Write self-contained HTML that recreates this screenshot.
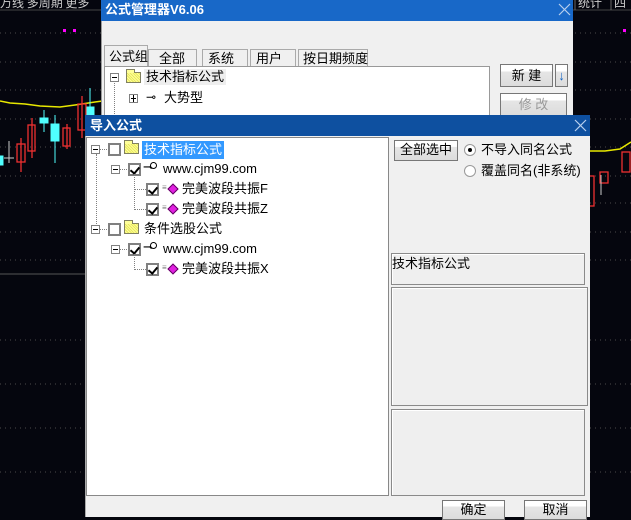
<!DOCTYPE html>
<html><head><meta charset="utf-8"><style>
*{margin:0;padding:0;box-sizing:border-box}
body{width:631px;height:517px;overflow:hidden;background:#05060e;position:relative;font-family:"Liberation Sans","Noto Sans CJK SC",sans-serif;font-size:13px;color:#000}
.a{position:absolute}
.t{white-space:nowrap;line-height:16px}
.btn{position:absolute;background:linear-gradient(#fff 0,#fff 30%,#e6e6e6 31%,#dcdcdc);border:1px solid #777;text-align:center;line-height:18px;font-size:13px}
.cb{position:absolute;width:13px;height:13px;border:2px solid #808080;background:#fff}
.cb.k::after{content:"";position:absolute;left:2px;top:0px;width:4px;height:7px;border:solid #000;border-width:0 2px 2px 0;transform:rotate(40deg)}
.ex{position:absolute;width:9px;height:9px;border:1px solid #808080;background:#fff}
.ex::after{content:"";position:absolute;left:1px;top:3px;width:5px;height:1px;background:#000}
.dv{position:absolute;border-left:1px dotted #808080}
.dh{position:absolute;border-top:1px dotted #808080}
.fold{position:absolute;width:15px;height:11px;background:#ffff80;border:1px solid #808060;background-image:repeating-linear-gradient(45deg,#e8e860 0 1px,#ffff99 1px 2px)}
.fold::before{content:"";position:absolute;left:-1px;top:-4px;width:7px;height:3px;border:1px solid #808060;border-bottom:none;background:#ffff99}
.gem{position:absolute;width:8px;height:8px;background:#e020e0;border:1px solid #600060;transform:rotate(45deg)}
.box{position:absolute;border:1px solid #8a8a8a;box-shadow:inset 1px 1px 0 #fff;background:#efefef}
</style></head><body>
<svg class="a" style="left:0;top:0" width="631" height="517">
<g stroke="#4a4a4a" stroke-dasharray="1 4">
<line x1="0" y1="33" x2="631" y2="33"/><line x1="0" y1="62" x2="631" y2="62"/><line x1="0" y1="90" x2="631" y2="90"/><line x1="0" y1="119" x2="631" y2="119"/><line x1="0" y1="147" x2="631" y2="147"/><line x1="0" y1="176" x2="631" y2="176"/><line x1="0" y1="203" x2="631" y2="203"/><line x1="0" y1="232" x2="631" y2="232"/><line x1="0" y1="260" x2="631" y2="260"/><line x1="0" y1="340" x2="631" y2="340"/><line x1="0" y1="384" x2="631" y2="384"/><line x1="0" y1="428" x2="631" y2="428"/><line x1="0" y1="472" x2="631" y2="472"/>
</g>
<line x1="0" y1="274" x2="85" y2="274" stroke="#555"/>
<line x1="0" y1="10" x2="631" y2="10" stroke="#444"/>
<polyline points="0,101 10,103 25,104 40,106 60,107 75,105 95,102 110,100 125,98 140,97 160,98 200,99 230,99" fill="none" stroke="#e8e800" stroke-width="1.5"/>
<polyline points="590,151 605,151 620,149 631,142" fill="none" stroke="#e8e800" stroke-width="1.5"/>
<g stroke="#ee3030" fill="none" stroke-width="1.3">
<rect x="17" y="144" width="8" height="18"/><line x1="21" y1="138" x2="21" y2="172"/>
<rect x="28" y="125" width="7" height="26"/><line x1="32" y1="118" x2="32" y2="158"/>
<rect x="63" y="128" width="7" height="18"/><line x1="67" y1="124" x2="67" y2="149"/>
<rect x="78" y="104" width="8" height="26"/><line x1="82" y1="96" x2="82" y2="138"/>
<rect x="600" y="172" width="8" height="11"/><rect x="622" y="152" width="8" height="20"/><rect x="588" y="176" width="6" height="30"/>
</g>
<g fill="#50ffff" stroke="#50ffff">
<rect x="40" y="118" width="8" height="5"/><line x1="44" y1="110" x2="44" y2="132"/>
<rect x="51" y="124" width="8" height="17"/><line x1="55" y1="115" x2="55" y2="163"/>
<rect x="87" y="107" width="7" height="8"/><line x1="90" y1="88" x2="90" y2="115"/>
<rect x="0" y="156" width="3" height="9"/>
</g>
<g stroke="#ccc"><line x1="9" y1="141" x2="9" y2="163"/><line x1="4" y1="158" x2="14" y2="158"/><line x1="601" y1="175" x2="601" y2="195"/></g>
<g fill="#ff00ff"><rect x="63" y="29" width="3" height="3"/><rect x="73" y="29" width="3" height="3"/><rect x="623" y="29" width="3" height="3"/></g>
<text x="0" y="7" fill="#ccc" font-size="12" font-family="Noto Sans CJK SC">万线  多周期  更多</text>
<text x="578" y="7" fill="#ccc" font-size="12" font-family="Noto Sans CJK SC">统计</text>
<text x="614" y="7" fill="#ccc" font-size="12" font-family="Noto Sans CJK SC">四</text>
<line x1="575" y1="0" x2="575" y2="10" stroke="#666"/><line x1="611" y1="0" x2="611" y2="10" stroke="#666"/>
</svg>

<!-- manager dialog -->
<div class="a" style="left:101px;top:0;width:472px;height:116px;background:#f0f0f0;border-left:1px solid #999"></div>
<div class="a" style="left:101px;top:0;width:472px;height:21px;background:#1868c8"></div>
<div class="a t" style="left:105px;top:2px;color:#fff;font-weight:bold;font-size:13px">公式管理器V6.06</div>
<svg class="a" style="left:558px;top:3px" width="13" height="13"><path d="M1 1L12 12M12 1L1 12" stroke="#b8cfee" stroke-width="1.2"/></svg>
<div class="a" style="left:104px;top:45px;width:44px;height:22px;background:#f0f0f0;border:1px solid #aaa;border-bottom:none"></div>
<div class="a t" style="left:109px;top:49px">公式组</div>
<div class="a" style="left:148px;top:49px;width:49px;height:17px;border:1px solid #aaa;border-bottom:none;background:#f0f0f0"></div><div class="a t" style="left:159px;top:51px">全部</div>
<div class="a" style="left:202px;top:49px;width:46px;height:17px;border:1px solid #aaa;border-bottom:none"></div><div class="a t" style="left:208px;top:51px">系统</div>
<div class="a" style="left:250px;top:49px;width:46px;height:17px;border:1px solid #aaa;border-bottom:none"></div><div class="a t" style="left:256px;top:51px">用户</div>
<div class="a" style="left:298px;top:49px;width:70px;height:17px;border:1px solid #aaa;border-bottom:none"></div><div class="a t" style="left:303px;top:51px">按日期频度</div>
<div class="a" style="left:104px;top:66px;width:386px;height:50px;background:#fff;border:1px solid #999"></div>
<div class="ex" style="left:110px;top:73px"></div>
<div class="fold" style="left:126px;top:72px"></div>
<div class="a t" style="left:144px;top:69px;background:#eee;padding:0 2px">技术指标公式</div>
<div class="dv" style="left:114px;top:83px;height:33px"></div>
<div class="ex" style="left:129px;top:94px"></div>
<div class="a" style="left:133px;top:95px;width:1px;height:7px;background:#000"></div>
<div class="a t" style="left:146px;top:89px;font-size:12px">⊸</div>
<div class="a t" style="left:164px;top:90px">大势型</div>
<div class="btn" style="left:500px;top:64px;width:53px;height:23px;line-height:21px">新 建</div>
<div class="btn" style="left:555px;top:64px;width:13px;height:23px;line-height:21px;color:#1464c4">↓</div>
<div class="btn" style="left:500px;top:93px;width:67px;height:23px;line-height:21px;color:#999">修 改</div>

<!-- import dialog -->
<div class="a" style="left:85px;top:115px;width:505px;height:402px;background:#f0f0f0;border-left:1px solid #aaa"></div>
<div class="a" style="left:85px;top:115px;width:505px;height:21px;background:#0e50a0"></div>
<div class="a t" style="left:90px;top:118px;color:#fff;font-weight:bold">导入公式</div>
<svg class="a" style="left:574px;top:119px" width="13" height="13"><path d="M1 1L12 12M12 1L1 12" stroke="#b8cfee" stroke-width="1.2"/></svg>
<div class="a" style="left:86px;top:137px;width:303px;height:359px;background:#fff;border:1px solid #888"></div>
<!-- tree -->
<div class="dv" style="left:96px;top:154px;height:76px"></div>
<div class="ex" style="left:91px;top:145px"></div><div class="dh" style="left:100px;top:149px;width:9px"></div>
<div class="cb" style="left:108px;top:143px"></div>
<div class="fold" style="left:124px;top:143px"></div>
<div class="a t" style="left:142px;top:141px;background:#3399ff;color:#fff;padding:0 2px;height:18px;line-height:17px">技术指标公式</div>
<div class="ex" style="left:111px;top:165px"></div><div class="dh" style="left:120px;top:169px;width:9px"></div>
<div class="cb k" style="left:128px;top:163px"></div>
<div class="a t" style="left:143px;top:159px;font-size:13px">⊸</div><div class="a" style="left:150px;top:162px;width:7px;height:7px;border:1px solid #000;border-radius:50%;background:#fff"></div>
<div class="a t" style="left:163px;top:161px">www.cjm99.com</div>
<div class="dv" style="left:134px;top:174px;height:36px"></div>
<div class="dh" style="left:134px;top:189px;width:12px"></div><div class="dh" style="left:134px;top:209px;width:12px"></div>
<div class="cb k" style="left:146px;top:183px"></div><div class="gem" style="left:169px;top:185px"></div>
<div class="a t" style="left:162px;top:180px;font-size:8px;color:#777">≡</div>
<div class="a t" style="left:182px;top:181px">完美波段共振F</div>
<div class="cb k" style="left:146px;top:203px"></div><div class="gem" style="left:169px;top:205px"></div>
<div class="a t" style="left:162px;top:200px;font-size:8px;color:#777">≡</div>
<div class="a t" style="left:182px;top:201px">完美波段共振Z</div>
<div class="ex" style="left:91px;top:225px"></div><div class="dh" style="left:100px;top:229px;width:9px"></div>
<div class="cb" style="left:108px;top:223px"></div>
<div class="fold" style="left:124px;top:223px"></div>
<div class="a t" style="left:144px;top:221px">条件选股公式</div>
<div class="ex" style="left:111px;top:245px"></div><div class="dh" style="left:120px;top:249px;width:9px"></div>
<div class="cb k" style="left:128px;top:243px"></div>
<div class="a t" style="left:143px;top:239px">⊸</div><div class="a" style="left:150px;top:242px;width:7px;height:7px;border:1px solid #000;border-radius:50%;background:#fff"></div>
<div class="a t" style="left:163px;top:241px">www.cjm99.com</div>
<div class="dv" style="left:134px;top:254px;height:16px"></div><div class="dh" style="left:134px;top:269px;width:12px"></div>
<div class="cb k" style="left:146px;top:263px"></div><div class="gem" style="left:169px;top:265px"></div>
<div class="a t" style="left:162px;top:260px;font-size:8px;color:#777">≡</div>
<div class="a t" style="left:182px;top:261px">完美波段共振X</div>
<!-- right side -->
<div class="btn" style="left:394px;top:140px;width:64px;height:21px">全部选中</div>
<div class="a" style="left:464px;top:144px;width:12px;height:12px;border-radius:50%;border:1px solid #999;background:#fff"></div>
<div class="a" style="left:468px;top:148px;width:4px;height:4px;border-radius:50%;background:#000"></div>
<div class="a t" style="left:481px;top:142px">不导入同名公式</div>
<div class="a" style="left:464px;top:165px;width:12px;height:12px;border-radius:50%;border:1px solid #999;background:#fff"></div>
<div class="a t" style="left:481px;top:163px">覆盖同名(非系统)</div>
<div class="box" style="left:391px;top:253px;width:194px;height:32px"></div>
<div class="a t" style="left:392px;top:256px">技术指标公式</div>
<div class="box" style="left:391px;top:287px;width:197px;height:119px"></div>
<div class="box" style="left:391px;top:409px;width:194px;height:87px"></div>
<div class="btn" style="left:442px;top:500px;width:63px;height:20px">确定</div>
<div class="btn" style="left:524px;top:500px;width:63px;height:20px">取消</div>
</body></html>
